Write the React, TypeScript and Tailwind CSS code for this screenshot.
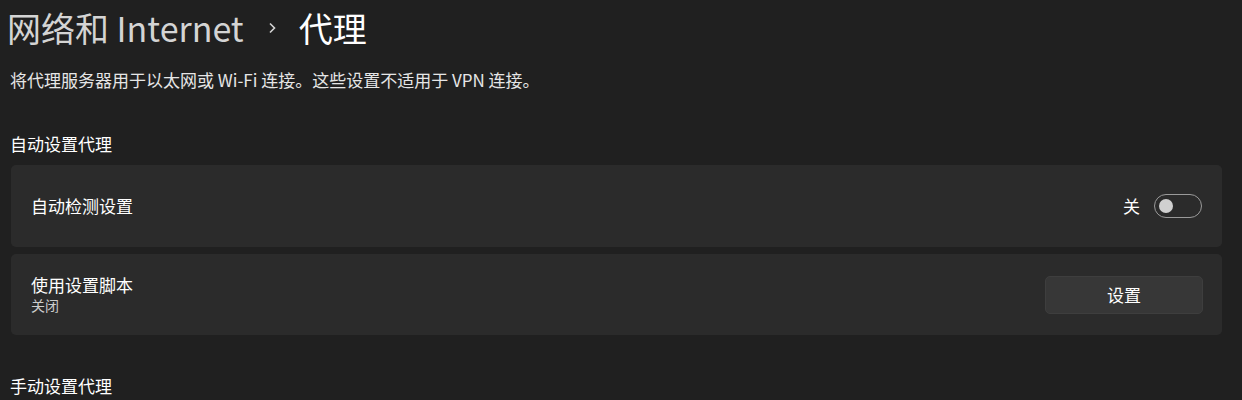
export default function App() {
  return (
    <div
      className="w-[1242px] h-[400px] overflow-hidden bg-[#202020] text-white"
      style={{ fontFamily: '"Noto Sans CJK SC", "Noto Sans", sans-serif' }}
    >
      <div className="flex items-center h-[56px] pl-[7px]">
        <span className="text-[34px] leading-none text-[#d4d4d4]">网络和 Internet</span>
        <svg className="ml-[23px] mr-[22px]" width="10" height="14" viewBox="0 0 10 14">
          <path d="M3 2.5 L7.5 7 L3 11.5" fill="none" stroke="#d4d4d4" strokeWidth="1.6" />
        </svg>
        <span className="text-[34px] leading-none text-white">代理</span>
      </div>
      <p className="mt-[12px] pl-[10px] text-[17px] leading-[24px] text-[#e6e6e6]">
        将代理服务器用于以太网或 Wi-Fi 连接。这些设置不适用于 VPN 连接。
      </p>

      <h2 className="mt-[40px] pl-[10px] text-[17px] leading-[24px] text-white">自动设置代理</h2>

      <div className="mt-[9px] mr-[20px] ml-[11px] flex flex-col gap-[7px]">
        <div className="h-[82px] rounded-[5px] bg-[#2b2b2b] flex items-center justify-between pl-[20px] pr-[20px]">
          <span className="text-[17px] text-white">自动检测设置</span>
          <div className="flex items-center gap-[14px]">
            <span className="text-[17px] text-white">关</span>
            <div className="w-[48px] h-[24px] rounded-full border border-[#9a9a9a] flex items-center pl-[4px]">
              <div className="w-[14px] h-[14px] rounded-full bg-[#d0d0d0]" />
            </div>
          </div>
        </div>
        <div className="h-[81px] rounded-[5px] bg-[#2b2b2b] flex items-center justify-between pl-[20px] pr-[19px]">
          <div className="flex flex-col">
            <span className="text-[17px] leading-[22px] text-white">使用设置脚本</span>
            <span className="text-[14px] leading-[19px] text-[#cccccc]">关闭</span>
          </div>
          <button className="w-[158px] h-[38px] rounded-[5px] bg-[#373737] border border-[#3e3e3e] text-[17px] text-white">
            设置
          </button>
        </div>
      </div>

      <h2 className="mt-[39px] pl-[10px] text-[17px] leading-[24px] text-white">手动设置代理</h2>
    </div>
  );
}
